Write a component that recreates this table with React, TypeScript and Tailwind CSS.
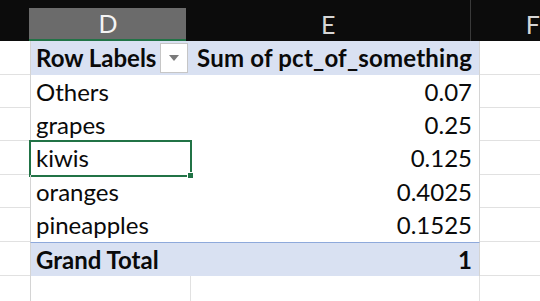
import React from 'react';

type Row = { label: string; value: string };

const rows: Row[] = [
  { label: 'Others', value: '0.07' },
  { label: 'grapes', value: '0.25' },
  { label: 'kiwis', value: '0.125' },
  { label: 'oranges', value: '0.4025' },
  { label: 'pineapples', value: '0.1525' },
];

const heights = ['h-[33px]', 'h-[33px]', 'h-[34px]', 'h-[33px]', 'h-[34px]'];

export default function App() {
  return (
    <div
      className="w-[540px] h-[301px] overflow-hidden bg-white text-[24px] text-[#0a0a0a]"
      style={{ fontFamily: 'Lato, "Open Sans", sans-serif' }}
    >
      {/* column header strip */}
      <div className="flex h-[41px] bg-[#0c0c0c] text-[25px]">
        <div className="w-[30px]" />
        <div className="w-[160px] mt-[8px] flex items-center justify-center bg-[#6b6b6b] border-b-2 border-[#217346] text-[#f4f4f4]">
          D
        </div>
        <div className="w-[290px] flex items-center justify-center pt-[8px] text-[#d6d6d6] border-r border-[#3a3a3a]">
          E
        </div>
        <div className="flex-1 flex items-center pl-[55px] pt-[8px] text-[#d6d6d6]">F</div>
      </div>

      {/* pivot header */}
      <div className="flex h-[34px]">
        <div className="w-[30px] border-b border-[#e1e1e1]" />
        <div className="w-[160px] flex items-center justify-between bg-[#d9e1f2] border-l border-[#d4d4d4] pl-[5px] pr-[2px] font-bold">
          <span>Row Labels</span>
          <span className="w-[28px] h-[30px] flex items-center justify-center bg-white border border-[#c6c6c6]">
            <svg width="10" height="6" viewBox="0 0 10 6">
              <path d="M0 0h10L5 6z" fill="#7a7a7a" />
            </svg>
          </span>
        </div>
        <div className="w-[290px] flex items-center justify-end bg-[#d9e1f2] pr-[7px] font-bold border-r border-[#d4d4d4] tracking-[0.2px]">
          Sum of pct_of_something
        </div>
        <div className="flex-1 border-b border-[#e1e1e1]" />
      </div>

      {rows.map((r, i) => (
        <div key={r.label} className={`flex ${heights[i]}`}>
          <div className="w-[30px] border-b border-[#e1e1e1]" />
          <div className="relative w-[160px] flex items-center pl-[5px] border-l border-[#d4d4d4]">
            {r.label}
            {r.label === 'kiwis' && (
              <div className="absolute -left-[2px] -top-[1px] -right-[2px] -bottom-[2px] border-2 border-[#217346]">
                <div className="absolute -right-[4px] -bottom-[4px] w-[7px] h-[7px] bg-[#217346] border border-white" />
              </div>
            )}
          </div>
          <div className="w-[290px] flex items-center justify-end pr-[7px] border-r border-[#d4d4d4]">
            {r.value}
          </div>
          <div className="flex-1 border-b border-[#e1e1e1]" />
        </div>
      ))}

      {/* grand total */}
      <div className="flex h-[34px]">
        <div className="w-[30px] border-b border-[#e1e1e1]" />
        <div className="w-[160px] flex items-center pl-[5px] bg-[#d9e1f2] border-t border-[#8ea9db] border-l border-l-[#d4d4d4] font-bold">
          Grand Total
        </div>
        <div className="w-[290px] flex items-center justify-end pr-[7px] bg-[#d9e1f2] border-t border-[#8ea9db] border-r border-r-[#d4d4d4] font-bold">
          1
        </div>
        <div className="flex-1 border-b border-[#e1e1e1]" />
      </div>

      {/* empty row below */}
      <div className="flex h-[30px]">
        <div className="w-[30px]" />
        <div className="w-[160px] border-l border-[#d4d4d4]" />
        <div className="w-[290px] border-l border-r border-[#e1e1e1]" />
        <div className="flex-1" />
      </div>
    </div>
  );
}
